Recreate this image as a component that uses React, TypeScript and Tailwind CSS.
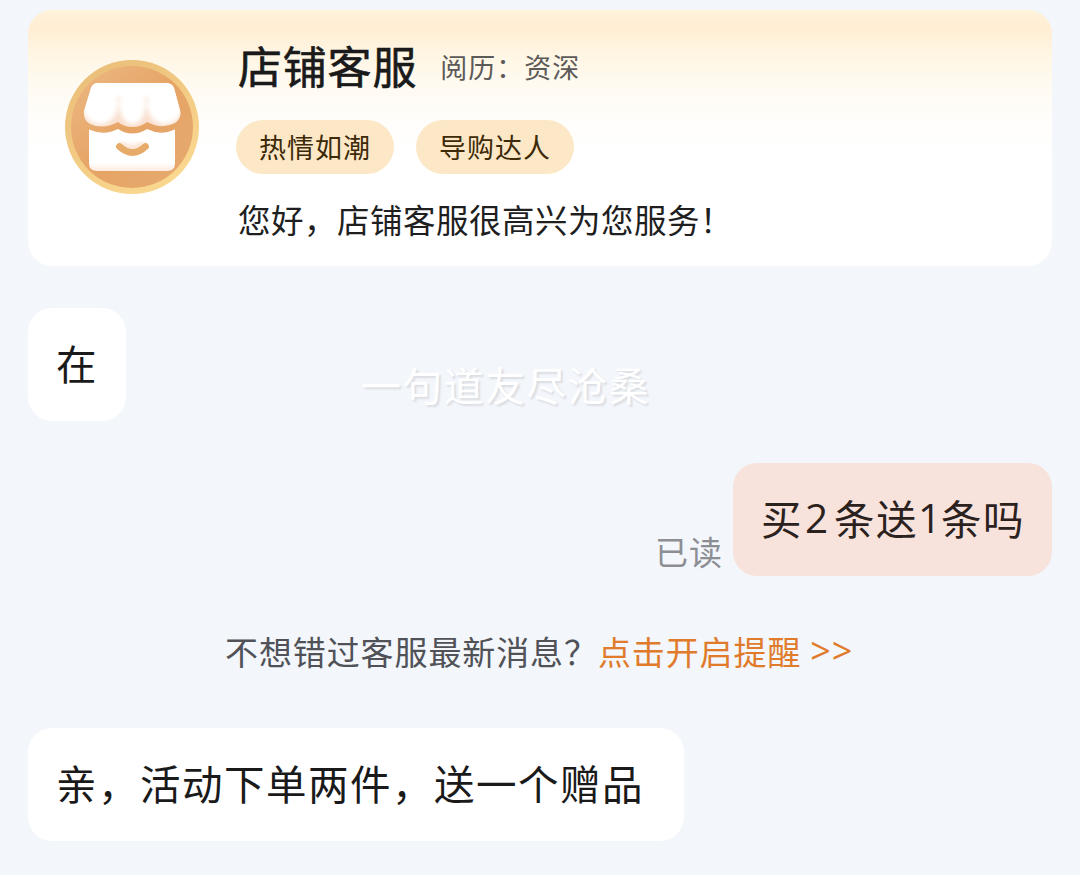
import type { ReactNode } from "react";

const tags = ["热情如潮", "导购达人"];

function ShopAvatar() {
  return (
    <svg viewBox="0 0 134 134" className="h-[134px] w-[134px] shrink-0">
      <defs>
        <linearGradient id="disc" x1="0" y1="0" x2="1" y2="1">
          <stop offset="0" stopColor="#ecb984" />
          <stop offset="0.5" stopColor="#e6a465" />
          <stop offset="1" stopColor="#e6aa70" />
        </linearGradient>
        <linearGradient id="ring" x1="0" y1="0" x2="0.6" y2="1">
          <stop offset="0" stopColor="#e8bb76" />
          <stop offset="1" stopColor="#fad78f" />
        </linearGradient>
        <linearGradient id="wall" x1="0" y1="0" x2="0" y2="1">
          <stop offset="0.8" stopColor="#ffffff" />
          <stop offset="1" stopColor="#fdebe0" />
        </linearGradient>
        <filter id="soft" x="-30%" y="-30%" width="160%" height="160%">
          <feGaussianBlur stdDeviation="2.2" />
        </filter>
        <clipPath id="awning">
          <path d="M33 23H101Q107 23 109 28L115 50Q117 58 110 63Q97 70 82 62Q76 67 67.500 67Q59 67 53 62Q38 70 25 64Q18 60 19 51L26 28Q28 23 33 23Z" />
        </clipPath>
      </defs>
      <circle cx="67" cy="67" r="67" fill="url(#ring)" />
      <circle cx="67" cy="67" r="61" fill="url(#disc)" />
      <path
        d="M24 69.500Q39 76 53 69Q60 73.500 67.500 73.500Q75 73.500 82 69Q96 76 110 69.500V103Q110 111 102 111H32Q24 111 24 103Z"
        fill="url(#wall)"
      />
      <g clipPath="url(#awning)">
        <rect x="15" y="20" width="104" height="52" fill="#fae0d0" />
        <g fill="#ffffff" filter="url(#soft)">
          <path d="M12 12H122V37H12Z" />
          <ellipse cx="35" cy="44" rx="18" ry="20" />
          <ellipse cx="67.5" cy="44" rx="13" ry="20" />
          <ellipse cx="100" cy="44" rx="18" ry="20" />
        </g>
      </g>
      <path
        d="M56 83Q67.500 92 79 83"
        fill="none"
        stroke="#fad9c4"
        strokeWidth="4"
        filter="url(#soft)"
      />
      <path
        d="M54.5 86.500Q67.500 98.500 80.500 86.500"
        fill="none"
        stroke="#e6ab69"
        strokeWidth="6.8"
        strokeLinecap="round"
      />
    </svg>
  );
}

function Bubble({ children, className }: { children: ReactNode; className: string }) {
  return (
    <div
      className={`flex h-[113px] items-center rounded-3xl pb-[3px] pl-7 text-[40.5px] tracking-[1.5px] whitespace-nowrap ${className}`}
    >
      {children}
    </div>
  );
}

export default function App() {
  return (
    <div
      lang="zh-CN"
      className="relative h-[875px] w-[1080px] overflow-hidden bg-[#f3f6fa] px-7 pt-2.5 font-['Noto_Sans_CJK_SC',sans-serif] leading-none"
    >
      <section className="flex h-64 rounded-3xl bg-white bg-[linear-gradient(180deg,#fff3db_0px,#ffedd3_18px,#fff5e2_42px,#fffaf0_72px,#fffdfa_105px,#ffffff_140px)] pl-[37px]">
        <div className="pt-[50px]">
          <ShopAvatar />
        </div>
        <div className="flex flex-col pl-[37px]">
          <div className="flex h-[110px] items-center gap-[23px] pl-0.5 whitespace-nowrap">
            <h1 className="pb-px text-[44px] tracking-[0.8px] text-[#1a1a1a] [-webkit-text-stroke:0.6px_#1a1a1a]">
              店铺客服
            </h1>
            <span className="pt-0.5 text-[27px] tracking-[1px] text-[#5c5a58]">阅历：资深</span>
          </div>
          <div className="flex gap-[22px]">
            {tags.map((tag) => (
              <span
                key={tag}
                className="flex h-[54px] w-[158px] items-center rounded-full bg-[#fce8c6] pb-0.5 pl-[23px] text-[27px] tracking-[1px] whitespace-nowrap text-[#3d2a08]"
              >
                {tag}
              </span>
            ))}
          </div>
          <p className="pt-[29px] pl-0.5 text-[32.5px] tracking-[0.5px] whitespace-nowrap text-[#1f1f1f]">
            您好，店铺客服很高兴为您服务！
          </p>
        </div>
      </section>

      <div className="mt-[42px] flex">
        <Bubble className="w-[98px] bg-white text-[#1a1a1a]">在</Bubble>
      </div>

      <div className="mt-[42px] flex items-end justify-end gap-2.5">
        <span className="pb-2 text-[33px] tracking-[1px] text-[#8c8e94]">已读</span>
        <Bubble className="w-[319px] bg-[#f8e3dc] text-[#2b2220]">
          买<span className="w-[31px] pl-0.5 font-['Open_Sans',sans-serif]">2</span>
          条送<span className="w-[23px] font-['Open_Sans',sans-serif]">1</span>条吗
        </Bubble>
      </div>

      <p className="mt-[59px] flex h-8 items-center pl-[197px] text-[33px] tracking-[0.9px] whitespace-nowrap text-[#505258]">
        不想错过客服最新消息？
        <span className="flex items-center text-[#e07b2c]">
          点击开启提醒
          <span className="pl-[9px] font-['Open_Sans',sans-serif] text-[36px]">&gt;&gt;</span>
        </span>
      </p>

      <div className="mt-[61px] flex">
        <Bubble className="w-[656px] bg-white text-[#1a1a1a]">亲，活动下单两件，送一个赠品</Bubble>
      </div>

      <div className="pointer-events-none absolute top-[364px] left-[361px] text-[40px] tracking-[1.3px] whitespace-nowrap text-white [text-shadow:2px_2px_2px_rgba(120,120,130,0.2)]">
        一句道友尽沧桑
      </div>
    </div>
  );
}
